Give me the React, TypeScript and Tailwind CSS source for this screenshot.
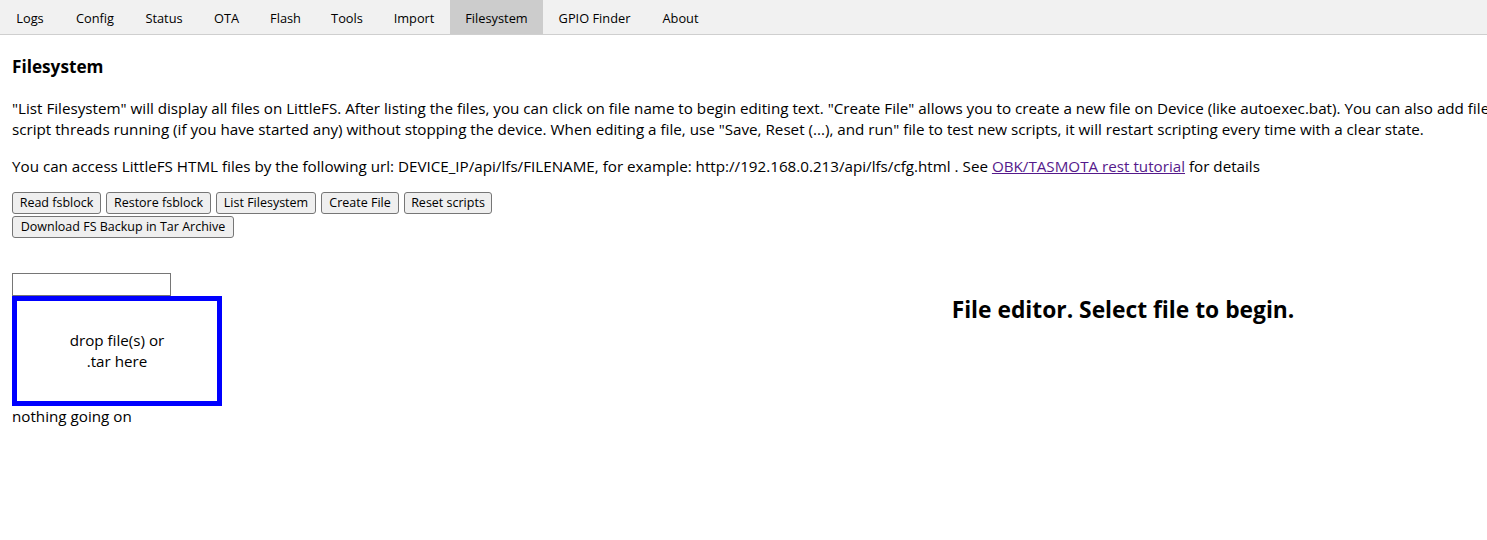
export default function App() {
  const tabs: [string, number][] = [
    ["Logs", 60],
    ["Config", 70],
    ["Status", 68],
    ["OTA", 57],
    ["Flash", 61],
    ["Tools", 62],
    ["Import", 72],
    ["Filesystem", 93],
    ["GPIO Finder", 103],
    ["About", 69],
  ];
  const btn =
    "h-[22px] flex items-center justify-center bg-[#efefef] border border-[#767676] rounded-[3px] text-[12.5px] text-black whitespace-nowrap";
  return (
    <div className="w-full h-[540px] overflow-hidden bg-white text-black font-['Open_Sans','Noto_Sans',sans-serif]">
      <nav className="flex h-[35px] bg-[#f1f1f1] border-b border-[#cfcfcf]">
        {tabs.map(([t, w]) => (
          <div
            key={t}
            style={{ width: w }}
            className={
              "h-full flex items-center justify-center pt-[4px] text-[12.8px] " +
              (t === "Filesystem" ? "bg-[#cccccc]" : "")
            }
          >
            {t}
          </div>
        ))}
      </nav>
      <main className="px-3">
        <h3 className="mt-[19px] leading-[25px] text-[17.2px] font-bold">Filesystem</h3>
        <div className="mt-[19px] text-[15.2px] leading-[21px] whitespace-nowrap">
          <div>
            "List Filesystem" will display all files on LittleFS. After listing the files, you can click on file name to
            begin editing text. "Create File" allows you to create a new file on Device (like autoexec.bat). You can also
            add files by drag and drop. "Reset scripts" will clear all
          </div>
          <div>
            script threads running (if you have started any) without stopping the device. When editing a file, use "Save,
            Reset (...), and run" file to test new scripts, it will restart scripting every time with a clear state.
          </div>
        </div>
        <p className="mt-[16px] text-[15.2px] leading-[21px] whitespace-nowrap">
          You can access LittleFS HTML files by the following url: DEVICE_IP/api/lfs/FILENAME, for example:
          http://192.168.0.213/api/lfs/cfg.html . See{" "}
          <a href="#" className="text-[#551a8b] underline">
            OBK/TASMOTA rest tutorial
          </a>{" "}
          for details
        </p>
        <div className="mt-[15px] flex flex-col gap-[2px]">
          <div className="flex gap-[5px]">
            <button className={btn + " w-[89px]"}>Read fsblock</button>
            <button className={btn + " w-[105px]"}>Restore fsblock</button>
            <button className={btn + " w-[100px]"}>List Filesystem</button>
            <button className={btn + " w-[78px]"}>Create File</button>
            <button className={btn + " w-[88px]"}>Reset scripts</button>
          </div>
          <div className="flex">
            <button className={btn + " w-[222px]"}>Download FS Backup in Tar Archive</button>
          </div>
        </div>
        <div className="mt-[35px] flex">
          <div className="w-[210px]">
            <input
              type="text"
              className="block w-[159px] h-[23px] border border-[#767676] bg-white outline-none"
            />
            <div className="h-[110px] border-[5px] border-[#0000ff] flex items-center justify-center text-center text-[15.2px] leading-[21px]">
              <div>
                drop file(s) or
                <br />
                .tar here
              </div>
            </div>
            <div className="text-[15.2px] leading-[21px]">nothing going on</div>
          </div>
          <div className="ml-auto w-[706px] mr-[-1px] mt-[21px] text-center">
            <h2 className="text-[22.8px] leading-[32px] font-bold">File editor. Select file to begin.</h2>
          </div>
        </div>
      </main>
    </div>
  );
}
